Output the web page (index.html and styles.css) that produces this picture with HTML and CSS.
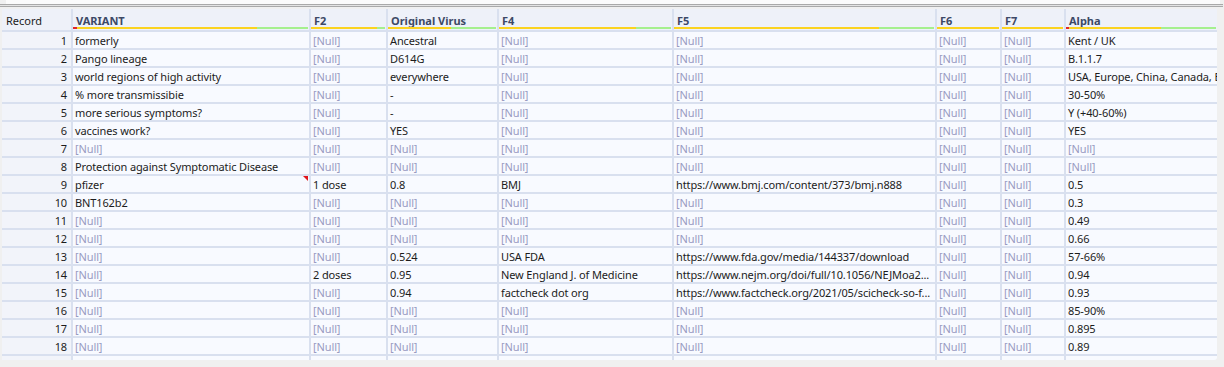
FILE: index.html
```html
<!DOCTYPE html>
<html lang="en">
<head>
    <meta charset="UTF-8">
    <title>Results Grid</title>
    <link rel="stylesheet" href="styles.css">
</head>
<body>
    <div class="toolbar"></div>
    <div class="divider"></div>

    <div class="grid" id="grid">
        <div class="row header">
            <div class="cell rec">Record</div>
            <div class="cell">VARIANT<div class="bar"><span class="red"></span><span class="yellow y-variant"></span><span class="green"></span></div></div>
            <div class="cell">F2<div class="bar"><span class="yellow y-f2"></span><span class="green"></span></div></div>
            <div class="cell">Original Virus<div class="bar"><span class="yellow y-orig"></span><span class="green"></span></div></div>
            <div class="cell">F4<div class="bar"><span class="yellow y-f4"></span><span class="green"></span></div></div>
            <div class="cell">F5<div class="bar"><span class="yellow y-f5"></span><span class="green"></span></div></div>
            <div class="cell">F6<div class="bar"><span class="yellow full"></span></div></div>
            <div class="cell">F7<div class="bar"><span class="yellow full"></span></div></div>
            <div class="cell">Alpha<div class="bar"><span class="red small"></span><span class="yellow y-alpha"></span><span class="green"></span></div></div>
        </div>
    </div>

    <script>
        const N = null;
        // record rows: VARIANT, F2, Original Virus, F4, F5, F6, F7, Alpha
        const rows = [
            ["formerly", N, "Ancestral", N, N, N, N, "Kent / UK"],
            ["Pango lineage", N, "D614G", N, N, N, N, "B.1.1.7"],
            ["world regions of high activity", N, "everywhere", N, N, N, N, "USA, Europe, China, Canada, B"],
            ["% more transmissibie", N, "-", N, N, N, N, "30-50%"],
            ["more serious symptoms?", N, "-", N, N, N, N, "Y (+40-60%)"],
            ["vaccines work?", N, "YES", N, N, N, N, "YES"],
            [N, N, N, N, N, N, N, N],
            ["Protection against Symptomatic Disease", N, N, N, N, N, N, N],
            ["pfizer", "1 dose", "0.8", "BMJ", "https://www.bmj.com/content/373/bmj.n888", N, N, "0.5"],
            ["BNT162b2", N, N, N, N, N, N, "0.3"],
            [N, N, N, N, N, N, N, "0.49"],
            [N, N, N, N, N, N, N, "0.66"],
            [N, N, "0.524", "USA FDA", "https://www.fda.gov/media/144337/download", N, N, "57-66%"],
            [N, "2 doses", "0.95", "New England J. of Medicine", "https://www.nejm.org/doi/full/10.1056/NEJMoa2...", N, N, "0.94"],
            [N, N, "0.94", "factcheck dot org", "https://www.factcheck.org/2021/05/scicheck-so-f...", N, N, "0.93"],
            [N, N, N, N, N, N, N, "85-90%"],
            [N, N, N, N, N, N, N, "0.895"],
            [N, N, N, N, N, N, N, "0.89"]
        ];

        const grid = document.getElementById("grid");

        rows.forEach((values, i) => {
            const row = document.createElement("div");
            row.className = "row";

            const rec = document.createElement("div");
            rec.className = "cell rec";
            rec.textContent = i + 1;
            row.appendChild(rec);

            values.forEach((value, col) => {
                const cell = document.createElement("div");
                cell.className = "cell";
                if (value === null) {
                    cell.classList.add("null");
                    cell.textContent = "[Null]";
                } else {
                    cell.textContent = value;
                }
                // comment marker on the pfizer cell
                if (i === 8 && col === 0) {
                    cell.classList.add("flagged");
                }
                row.appendChild(cell);
            });

            grid.appendChild(row);
        });

        // partly visible row at the bottom
        const last = document.createElement("div");
        last.className = "row";
        for (let c = 0; c < 9; c++) {
            const cell = document.createElement("div");
            cell.className = c === 0 ? "cell rec" : "cell";
            last.appendChild(cell);
        }
        grid.appendChild(last);
    </script>
</body>
</html>
```

FILE: styles.css
```css
body {
    margin: 0;
    padding: 0;
    background: #f0f0f0;
    font-family: "Noto Sans", "Open Sans", sans-serif;
    font-size: 11px;
    letter-spacing: -0.12px;
    color: #1c1c1c;
    overflow: hidden;
}
.toolbar {
    height: 4px;
    margin-left: 6px;
    margin-right: 4px;
    background: #fbfbfb;
}
.divider {
    height: 1px;
    border-top: 1px solid #a9a9a9;
    border-bottom: 1px solid #a9a9a9;
    background: #e4e4e4;
    margin-right: 1px;
}
.grid {
    margin: 2px 0 0 2px;
    width: 1215px;
    height: 351px;
    overflow: hidden;
    background: #f8faff;
    border-radius: 0 0 3px 0;
}
.row {
    display: grid;
    grid-template-columns: 69px 238px 77px 111px 175px 263px 65px 64px 153px;
    height: 16px;
    border-bottom: 2px solid #d9e0ef;
}
.cell {
    position: relative;
    border-left: 2px solid #d9e0ef;
    padding: 0 2px;
    line-height: 17px;
    white-space: nowrap;
    overflow: hidden;
}
.cell.rec {
    border-left: none;
    text-align: right;
    padding-right: 4px;
    background: #f2f4fa;
}
.null {
    color: #989bc2;
}
.flagged::after {
    content: "";
    position: absolute;
    top: 0;
    right: 1px;
    border-top: 5px solid #e0161c;
    border-left: 5px solid transparent;
}
.header {
    height: 21px;
    background: #eef1f9;
}
.header .cell {
    font-weight: bold;
    color: #3d4966;
    line-height: 23px;
    padding-left: 3px;
    letter-spacing: 0;
}
.header .cell.rec {
    font-weight: normal;
    color: #1c1c1c;
    text-align: left;
    padding-left: 4px;
    background: #eef1f9;
}
.bar {
    position: absolute;
    left: 0;
    right: 1px;
    bottom: 1px;
    height: 2px;
    display: flex;
}
.bar span {
    flex: none;
}
.red {
    width: 4px;
    background: #e3262a;
}
.red.small {
    width: 3px;
}
.yellow {
    background: #fbd31f;
}
.green {
    flex: 1 !important;
    background: #a5f08e;
}
.y-variant { width: 180px; }
.y-f2 { width: 66px; }
.y-orig { width: 63px; }
.y-f4 { width: 137px; }
.y-f5 { width: 205px; }
.y-alpha { width: 92px; }
.yellow.full {
    flex: 1;
}
```
